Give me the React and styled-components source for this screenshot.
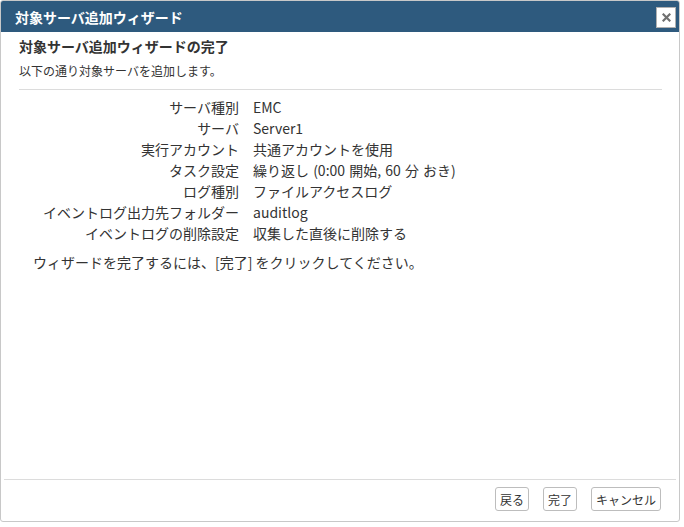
import React from 'react';
import styled, { createGlobalStyle } from 'styled-components';

const GlobalStyle = createGlobalStyle`
    body {
        margin: 0;
        background: #fff;
        font-family: 'Noto Sans CJK JP', 'Noto Sans', sans-serif;
        color: #333;
    }
`;

const rows = [
    ['サーバ種別', 'EMC'],
    ['サーバ', 'Server1'],
    ['実行アカウント', '共通アカウントを使用'],
    ['タスク設定', '繰り返し (0:00 開始, 60 分 おき)'],
    ['ログ種別', 'ファイルアクセスログ'],
    ['イベントログ出力先フォルダー', 'auditlog'],
    ['イベントログの削除設定', '収集した直後に削除する'],
];

const App = () => {
    return (
        <>
            <GlobalStyle />
            <Dialog>
                <Header>
                    <Title>対象サーバ追加ウィザード</Title>
                    <CloseButton aria-label="close">
                        <svg width="9" height="9" viewBox="0 0 9 9">
                            <path d="M1.5 1.5 L7.5 7.5 M7.5 1.5 L1.5 7.5" stroke="#707070" strokeWidth="2.2" strokeLinecap="square" />
                        </svg>
                    </CloseButton>
                </Header>
                <Body>
                    <Heading>対象サーバ追加ウィザードの完了</Heading>
                    <Sub>以下の通り対象サーバを追加します。</Sub>
                    <Divider />
                    <Summary>
                        {rows.map(([label, value]) => (
                            <React.Fragment key={label}>
                                <Label>{label}</Label>
                                <Value>{value}</Value>
                            </React.Fragment>
                        ))}
                    </Summary>
                    <Message>ウィザードを完了するには、[完了] をクリックしてください。</Message>
                </Body>
                <Footer>
                    <Button>戻る</Button>
                    <Button>完了</Button>
                    <Button>キャンセル</Button>
                </Footer>
            </Dialog>
        </>
    );
};

export default App;

const Dialog = styled.div`
    width: 680px;
    height: 522px;
    box-sizing: border-box;
    border: 1px solid #c8c8c8;
    border-radius: 3px;
    display: flex;
    flex-direction: column;
    overflow: hidden;
    background: #fff;
`;

const Header = styled.div`
    height: 31px;
    flex-shrink: 0;
    background: #2e5a7e;
    display: flex;
    align-items: center;
    justify-content: space-between;
    padding: 0 3px 0 14px;
`;

const Title = styled.div`
    color: #fff;
    font-size: 14px;
    font-weight: bold;
`;

const CloseButton = styled.div`
    width: 18px;
    height: 19px;
    background: #fff;
    border: 1px solid #b0b0b0;
    display: flex;
    align-items: center;
    justify-content: center;
    margin-top: 1px;
`;

const Body = styled.div`
    flex: 1;
    padding: 4px 17px 0 18px;
`;

const Heading = styled.div`
    font-size: 14px;
    font-weight: bold;
    line-height: 20px;
`;

const Sub = styled.div`
    font-size: 12px;
    line-height: 18px;
    margin-top: 6px;
`;

const Divider = styled.div`
    height: 1px;
    background: #dcdcdc;
    margin-top: 9px;
`;

const Summary = styled.div`
    display: grid;
    grid-template-columns: 220px 1fr;
    column-gap: 14px;
    grid-auto-rows: 21px;
    align-items: center;
    margin-top: 6px;
    font-size: 14px;
`;

const Label = styled.div`
    text-align: right;
    white-space: nowrap;
`;

const Value = styled.div`
    white-space: nowrap;
    word-spacing: 1px;
`;

const Message = styled.div`
    font-size: 14px;
    line-height: 21px;
    margin-top: 9px;
    padding-left: 14px;
`;

const Footer = styled.div`
    margin: 0 3px;
    border-top: 1px solid #dcdcdc;
    height: 42px;
    box-sizing: border-box;
    flex-shrink: 0;
    display: flex;
    justify-content: flex-end;
    align-items: flex-start;
    gap: 14px;
    padding: 7px 15px 0 0;
`;

const Button = styled.div`
    height: 24px;
    box-sizing: border-box;
    padding: 0 4px;
    border: 1px solid #bdbdbd;
    border-radius: 3px;
    background: #fff;
    font-size: 12px;
    display: flex;
    align-items: center;
    color: #333;
`;
